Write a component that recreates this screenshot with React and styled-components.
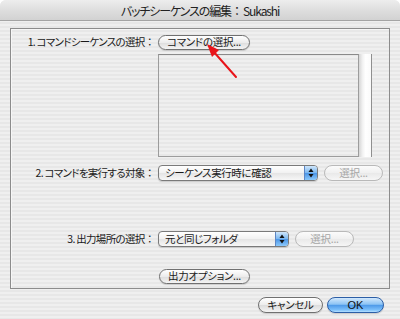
import React from "react";
import styled, { createGlobalStyle } from "styled-components";

const GlobalStyle = createGlobalStyle`
  html, body { margin: 0; padding: 0; background: #ffffff; }
  body {
    font-family: "Noto Sans CJK JP", "Noto Sans", sans-serif;
    color: #1a1a1a;
  }
`;

const Window = styled.div`
  position: relative;
  width: 400px;
  height: 319px;
  box-sizing: border-box;
  border-radius: 6px 6px 0 0;
  overflow: hidden;
  background: repeating-linear-gradient(
    to bottom,
    #efefef 0px,
    #efefef 2px,
    #e7e7e7 2px,
    #e7e7e7 4px
  );
  display: flex;
  flex-direction: column;
`;

const TitleBar = styled.div`
  height: 20px;
  flex: none;
  border-bottom: 1px solid #a4a4a4;
  background: linear-gradient(to bottom, #ededed 0%, #dedede 50%, #d2d2d2 100%);
  display: flex;
  align-items: center;
  justify-content: center;
  font-size: 12px;
  letter-spacing: -1.1px;
  color: #222;
  font-feature-settings: "palt";
`;

const Colon = styled.span`
  font-feature-settings: normal;
  letter-spacing: 0;
`;

const Body = styled.div`
  padding: 7px 10px 0 10px;
  display: flex;
  flex-direction: column;
`;

const Group = styled.div`
  width: 380px;
  height: 261px;
  box-sizing: border-box;
  border: 1px solid #8c8c8c;
  box-shadow: inset 1px 1px 0 #f6f6f6;
  display: flex;
  flex-direction: column;
`;

const Row = styled.div`
  display: grid;
  grid-template-columns: 144px auto;
  column-gap: 3px;
  align-items: center;
  margin-top: ${(p) => p.$top}px;
`;

const Label = styled.span`
  justify-self: end;
  font-size: 10.5px;
  letter-spacing: -0.7px;
  font-feature-settings: "palt";
  white-space: nowrap;
  line-height: 1;
`;

const Controls = styled.div`
  grid-column: 2;
  display: flex;
  align-items: center;
  gap: ${(p) => p.$gap || 0}px;
`;

const Pill = styled.button`
  box-sizing: border-box;
  width: ${(p) => p.$w}px;
  height: ${(p) => p.$h || 15}px;
  margin-left: ${(p) => p.$ml || 0}px;
  padding: 0;
  border-radius: 8px;
  border: 1px solid ${(p) => (p.disabled ? "#b9b9b9" : "#707070")};
  background: ${(p) =>
    p.disabled
      ? "linear-gradient(to bottom, #fbfbfb 0%, #f0f0f0 50%, #e9e9e9 51%, #f6f6f6 100%)"
      : "linear-gradient(to bottom, #ffffff 0%, #ececec 50%, #dcdcdc 51%, #f4f4f4 100%)"};
  box-shadow: ${(p) => (p.disabled ? "none" : "0 1px 1px rgba(0,0,0,0.15)")};
  color: ${(p) => (p.disabled ? "#a6a6a6" : "#1a1a1a")};
  font-family: inherit;
  font-size: 10.5px;
  letter-spacing: -0.3px;
  font-feature-settings: "palt";
  line-height: 1;
  display: flex;
  align-items: center;
  justify-content: center;
  white-space: nowrap;
`;

const DefaultPill = styled(Pill)`
  border-color: #2c5ea6;
  background: linear-gradient(
    to bottom,
    #d2e8fc 0%,
    #8cc3f4 45%,
    #4e9ae9 52%,
    #7cc0fb 85%,
    #b5e0ff 100%
  );
  color: #111;
  font-size: 11px;
  letter-spacing: 0;
  font-family: "Liberation Sans", sans-serif;
`;

const ListWrap = styled.div`
  grid-column: 2;
  display: flex;
  margin-top: 4px;
  height: 103px;
`;

const ListBox = styled.div`
  width: 201px;
  box-sizing: border-box;
  border: 1px solid #9c9c9c;
  border-top-color: #8a8a8a;
`;

const ScrollTrack = styled.div`
  width: 13px;
  box-sizing: border-box;
  border-right: 1px solid #8f8f8f;
  background: linear-gradient(
    to right,
    #d6d6d6 0%,
    #f2f2f2 30%,
    #ffffff 55%,
    #fafafa 100%
  );
`;

const Popup = styled.div`
  box-sizing: border-box;
  width: ${(p) => p.$w}px;
  height: 16px;
  border: 1px solid #7a7a7a;
  border-radius: 4px;
  overflow: hidden;
  display: flex;
  align-items: stretch;
  background: linear-gradient(to bottom, #ffffff 0%, #f1f1f1 50%, #e4e4e4 51%, #f7f7f7 100%);
  box-shadow: 0 1px 1px rgba(0,0,0,0.15);
`;

const PopupText = styled.span`
  flex: 1;
  padding-left: 6px;
  font-size: 10.5px;
  letter-spacing: -0.4px;
  font-feature-settings: "palt";
  display: flex;
  align-items: center;
  white-space: nowrap;
  line-height: 1;
`;

const PopupArrow = styled.span`
  width: 12px;
  flex: none;
  border-left: 1px solid #5d86c4;
  background: linear-gradient(
    to bottom,
    #cfe6fb 0%,
    #7db8f0 48%,
    #4b95e6 52%,
    #8cc9fb 100%
  );
  display: flex;
  align-items: center;
  justify-content: center;
`;

const Footer = styled.div`
  display: flex;
  justify-content: flex-end;
  gap: 4px;
  margin-top: 8px;
  padding-right: 6px;
`;

const Overlay = styled.svg`
  position: absolute;
  left: 0;
  top: 0;
  pointer-events: none;
`;

const Arrows = () => (
  <svg width="6" height="10" viewBox="0 0 6 10">
    <path d="M3 0.5 L5.5 4 L0.5 4 Z" fill="#111" />
    <path d="M3 9.5 L5.5 6 L0.5 6 Z" fill="#111" />
  </svg>
);

export default function App() {
  return (
    <>
      <GlobalStyle />
      <Window>
        <TitleBar>
          バッチシーケンスの編集<Colon>：</Colon>Sukashi
        </TitleBar>
        <Body>
          <Group>
            <Row $top={6}>
              <Label>
                1. コマンドシーケンスの選択<Colon>：</Colon>
              </Label>
              <Controls>
                <Pill $w={92}>コマンドの選択...</Pill>
              </Controls>
            </Row>
            <Row $top={0}>
              <ListWrap>
                <ListBox />
                <ScrollTrack />
              </ListWrap>
            </Row>
            <Row $top={8}>
              <Label>
                2. コマンドを実行する対象<Colon>：</Colon>
              </Label>
              <Controls $gap={6}>
                <Popup $w={160}>
                  <PopupText>シーケンス実行時に確認</PopupText>
                  <PopupArrow>
                    <Arrows />
                  </PopupArrow>
                </Popup>
                <Pill $w={59} $h={16} disabled>
                  選択...
                </Pill>
              </Controls>
            </Row>
            <Row $top={50}>
              <Label>
                3. 出力場所の選択<Colon>：</Colon>
              </Label>
              <Controls $gap={6}>
                <Popup $w={131}>
                  <PopupText>元と同じフォルダ</PopupText>
                  <PopupArrow>
                    <Arrows />
                  </PopupArrow>
                </Popup>
                <Pill $w={59} $h={16} disabled>
                  選択...
                </Pill>
              </Controls>
            </Row>
            <Row $top={22}>
              <Controls>
                <Pill $w={91} $ml={1}>
                  出力オプション...
                </Pill>
              </Controls>
            </Row>
          </Group>
          <Footer>
            <Pill $w={65} $h={16}>
              キャンセル
            </Pill>
            <DefaultPill $w={57} $h={16}>
              OK
            </DefaultPill>
          </Footer>
        </Body>
        <Overlay width="400" height="319" viewBox="0 0 400 319">
          <line
            x1="236"
            y1="77"
            x2="213"
            y2="51"
            stroke="#e8141a"
            strokeWidth="2"
            strokeLinecap="round"
          />
          <path d="M207 44 L219 50 L212 57 Z" fill="#e8141a" />
        </Overlay>
      </Window>
    </>
  );
}
